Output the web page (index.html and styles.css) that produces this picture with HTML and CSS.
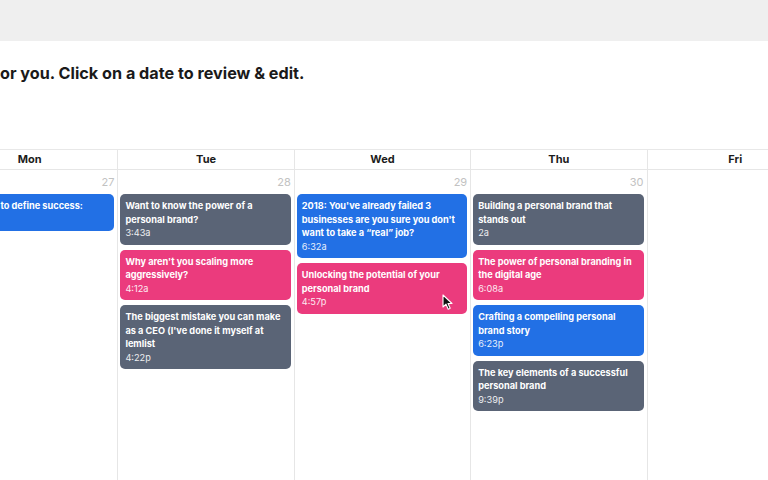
FILE: index.html
```html
<!DOCTYPE html>
<html lang="en">
<head>
    <meta charset="UTF-8">
    <meta name="viewport" content="width=device-width, initial-scale=1.0">
    <link rel="stylesheet" href="styles.css">
    <title>Content calendar</title>
</head>
<body>
    <div class="TopBar"></div>
    <div class="Intro">
        <h1 class="IntroText">or you. Click on a date to review &amp; edit.</h1>
    </div>
    <div class="Calendar">
        <div class="CalHead">
            <div class="HeadCell">Mon</div>
            <div class="HeadCell">Tue</div>
            <div class="HeadCell">Wed</div>
            <div class="HeadCell">Thu</div>
            <div class="HeadCell">Fri</div>
        </div>
        <div class="CalBody">
            <div class="DayCell">
                <div class="DayNum">27</div>
                <div class="Event Blue">
                    <div class="EvTitle">How I used to define success:</div>
                    <div class="EvTime">8:15a</div>
                </div>
            </div>
            <div class="DayCell">
                <div class="DayNum">28</div>
                <div class="Event Slate">
                    <div class="EvTitle">Want to know the power of a personal brand?</div>
                    <div class="EvTime">3:43a</div>
                </div>
                <div class="Event Pink">
                    <div class="EvTitle">Why aren't you scaling more aggressively?</div>
                    <div class="EvTime">4:12a</div>
                </div>
                <div class="Event Slate">
                    <div class="EvTitle">The biggest mistake you can make as a CEO (I've done it myself at lemlist</div>
                    <div class="EvTime">4:22p</div>
                </div>
            </div>
            <div class="DayCell">
                <div class="DayNum">29</div>
                <div class="Event Blue">
                    <div class="EvTitle">2018: You've already failed 3 businesses are you sure you don't want to take a “real” job?</div>
                    <div class="EvTime">6:32a</div>
                </div>
                <div class="Event Pink">
                    <div class="EvTitle">Unlocking the potential of your personal brand</div>
                    <div class="EvTime">4:57p</div>
                    <svg class="Cursor" width="12" height="17" viewBox="0 0 12 17">
                        <path d="M1 1 L1 13 L4 10.2 L6.2 15.2 L8.2 14.3 L6 9.5 L10 9.5 Z" fill="#111" stroke="#fff" stroke-width="1.1" stroke-linejoin="round"/>
                    </svg>
                </div>
            </div>
            <div class="DayCell">
                <div class="DayNum">30</div>
                <div class="Event Slate">
                    <div class="EvTitle">Building a personal brand that stands out</div>
                    <div class="EvTime">2a</div>
                </div>
                <div class="Event Pink">
                    <div class="EvTitle">The power of personal branding in the digital age</div>
                    <div class="EvTime">6:08a</div>
                </div>
                <div class="Event Blue">
                    <div class="EvTitle">Crafting a compelling personal brand story</div>
                    <div class="EvTime">6:23p</div>
                </div>
                <div class="Event Slate">
                    <div class="EvTitle">The key elements of a successful personal brand</div>
                    <div class="EvTime">9:39p</div>
                </div>
            </div>
            <div class="DayCell">
                <div class="DayNum"></div>
            </div>
        </div>
    </div>
</body>
</html>
```

FILE: styles.css
```css
body{
    margin: 0;
    font-family: Inter, 'Liberation Sans', sans-serif;
    background-color: white;
    overflow: hidden;
    height: 480px;
}
.TopBar{
    height: 41px;
    background-color: #efefef;
}
.Intro{
    padding-top: 21px;
    height: 87px;
}
.IntroText{
    margin: 0;
    font-size: 16.2px;
    line-height: 22px;
    font-weight: 700;
    color: #1a1a1a;
    white-space: nowrap;
}
.Calendar{
    margin-left: -58px;
    width: 900px;
}
.CalHead{
    display: grid;
    grid-template-columns: repeat(5, 176.4px);
    border-top: 1px solid #e8e8e8;
    border-bottom: 1px solid #e6e6e6;
}
.HeadCell{
    height: 19px;
    line-height: 19px;
    text-align: center;
    font-size: 11px;
    font-weight: 700;
    color: #1c1c1c;
    border-right: 1px solid #e6e6e6;
}
.CalBody{
    display: grid;
    grid-template-columns: repeat(5, 176.4px);
    height: 320px;
}
.DayCell{
    display: flex;
    flex-direction: column;
    gap: 5px;
    padding: 0 3px 0 2px;
    border-right: 1px solid #e6e6e6;
}
.DayNum{
    height: 19px;
    padding-top: 5px;
    text-align: right;
    font-size: 11px;
    color: #c2c2c2;
    padding-right: 0;
    margin-bottom: -5px;
}
.Event{
    position: relative;
    border-radius: 5px;
    padding: 5px 6px 5px 5px;
    color: white;
    font-size: 9.2px;
    line-height: 13.5px;
}
.EvTitle{
    font-weight: 700;
}
.EvTime{
    font-weight: 400;
    opacity: 0.9;
}
.Slate{
    background-color: #5a6476;
}
.Pink{
    background-color: #eb3b7d;
}
.Blue{
    background-color: #2270e5;
}
.Cursor{
    position: absolute;
    left: 145px;
    top: 31px;
}
```
